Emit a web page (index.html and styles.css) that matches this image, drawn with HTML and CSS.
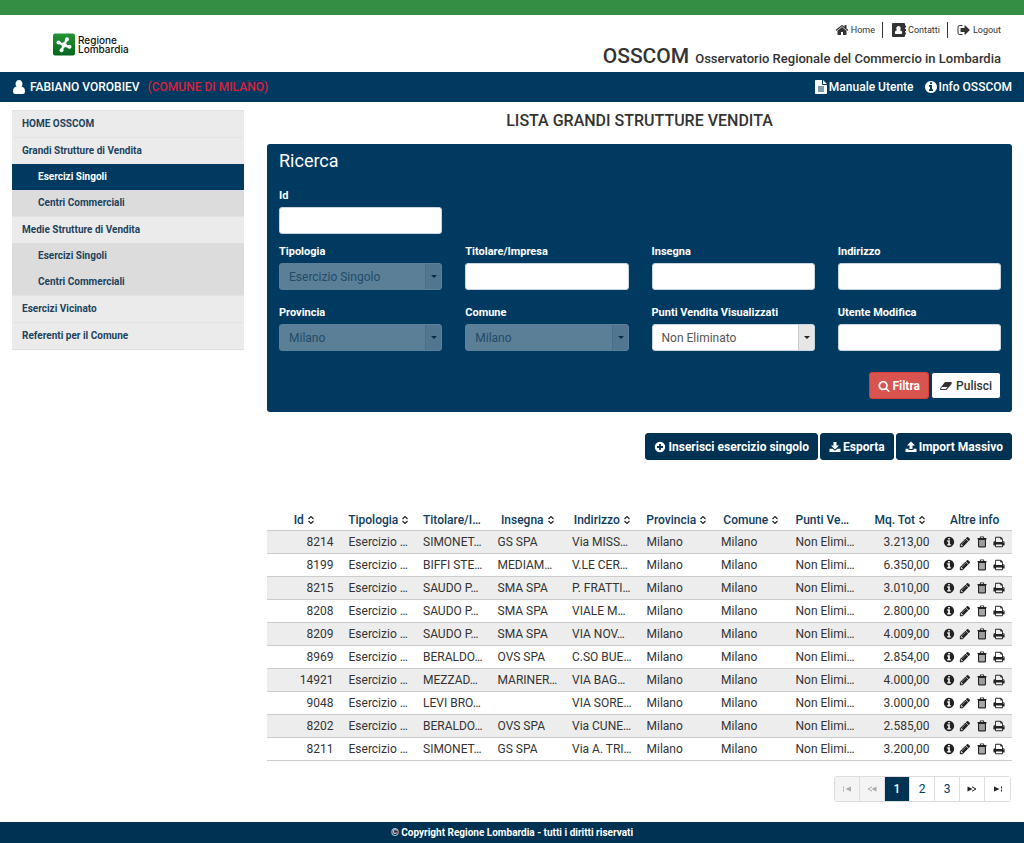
FILE: index.html
```html
<!DOCTYPE html>
<html lang="it">
<head>
<meta charset="utf-8">
<title>OSSCOM - Lista Grandi Strutture Vendita</title>
<link rel="stylesheet" href="styles.css">
</head>
<body>
<svg class="sprite" aria-hidden="true">
  <symbol id="home" viewBox="0 0 1792 1792"><path d="M1472 992v480q0 26-19 45t-45 19h-384v-384h-256v384h-384q-26 0-45-19t-19-45v-480q0-1 .5-3t.5-3l575-474 575 474q1 2 1 6zm223-69l-62 74q-8 9-21 11h-3q-13 0-21-7l-692-577-692 577q-12 8-24 7-13-2-21-11l-62-74q-8-10-7-23.500t11-21.500l719-599q32-26 76-26t76 26l244 204v-195q0-14 9-23t23-9h192q14 0 23 9t9 23v408l219 182q10 8 11 21.500t-7 23.500z"/></symbol>
  <symbol id="contacts" viewBox="0 0 14 14"><path fill-rule="evenodd" d="M1 0h11q1 0 1 1v1.500h1v2h-1v1.500h1v2h-1v1.500h1v2h-1v1.500q0 1-1 1h-11q-1 0-1-1v-12q0-1 1-1zM6.500 3a2.200 2.400 0 0 0-1.500 4.200q-2.200.3-2.200 2.600 0 1.200 1 1.200h5.400q1 0 1-1.200 0-2.300-2.200-2.600a2.200 2.400 0 0 0-1.500-4.200z"/></symbol>
  <symbol id="logout" viewBox="0 0 1792 1792"><path d="M704 1440q0 4 1 20t.5 26.500-3 23.500-10 19.500-20.500 6.500h-320q-119 0-203.500-84.500t-84.500-203.500v-704q0-119 84.500-203.500t203.500-84.500h320q13 0 22.500 9.500t9.500 22.500q0 4 1 20t.5 26.500-3 23.500-10 19.500-20.500 6.500h-320q-66 0-113 47t-47 113v704q0 66 47 113t113 47h312l11.500 1 11.500 3 8 5.500 7 9 2 13.500zm928-544q0 26-19 45l-544 544q-19 19-45 19t-45-19-19-45v-288h-448q-26 0-45-19t-19-45v-384q0-26 19-45t45-19h448v-288q0-26 19-45t45-19 45 19l544 544q19 19 19 45z"/></symbol>
  <symbol id="user" viewBox="0 0 12 14"><path d="M6 0a3.400 3.800 0 0 1 2.500 6.400q3.500.2 3.500 5.100 0 2.500-2.200 2.500h-7.600q-2.200 0-2.200-2.500 0-4.900 3.500-5.100a3.400 3.800 0 0 1 2.500-6.400z"/></symbol>
  <symbol id="file" viewBox="0 0 12 14"><path fill-rule="evenodd" d="M.7 0h6.300v4.300q0 .7.700.7h4.300v8.300q0 .7-.7.700h-10.600q-.7 0-.7-.7v-12.600q0-.7.7-.7zM8 0l4 4h-4zM3 6.500v1h6v-1zM3 8.500v1h6v-1zM3 10.500v1h6v-1z"/></symbol>
  <symbol id="info" viewBox="0 0 1792 1792"><path d="M1152 1376v-160q0-14-9-23t-23-9h-96v-512q0-14-9-23t-23-9h-320q-14 0-23 9t-9 23v160q0 14 9 23t23 9h96v320h-96q-14 0-23 9t-9 23v160q0 14 9 23t23 9h448q14 0 23-9t9-23zm-128-896v-160q0-14-9-23t-23-9h-192q-14 0-23 9t-9 23v160q0 14 9 23t23 9h192q14 0 23-9t9-23zm640 416q0 209-103 385.500t-279.500 279.500-385.500 103-385.500-103-279.500-279.500-103-385.500 103-385.500 279.500-279.500 385.500-103 385.500 103 279.500 279.500 103 385.500z"/></symbol>
  <symbol id="pencil" viewBox="0 0 1792 1792"><path d="M491 1536l91-91-235-235-91 91v107h128v128h107zm523-928q0-22-22-22-10 0-17 7l-542 542q-7 7-7 17 0 22 22 22 10 0 17-7l542-542q7-7 7-17zm-54-192l416 416-832 832h-416v-416zm683 96q0 53-37 90l-166 166-416-416 166-165q36-38 90-38 53 0 91 38l235 234q37 39 37 91z"/></symbol>
  <symbol id="trash" viewBox="0 0 12 12"><path fill-rule="evenodd" d="M4.200 .5h3.600l.5 1.500h2.200v1.200h-.5v7q0 1.300-1.200 1.300h-5.600q-1.200 0-1.200-1.300v-7h-.5v-1.200h2.200zM4.800 1.300v.7h2.400v-.7zM3.200 4v6.300h5.600v-6.300z"/><path d="M3.200 4h5.600v6.300h-5.600z" opacity=".4"/></symbol>
  <symbol id="print" viewBox="0 0 1792 1792"><path d="M448 1536h896v-256h-896v256zm0-640h896v-384h-160q-40 0-68-28t-28-68v-160h-640v640zm1152 64q0-26-19-45t-45-19-45 19-19 45 19 45 45 19 45-19 19-45zm128 0v416q0 13-9.500 22.500t-22.500 9.500h-224v160q0 40-28 68t-68 28h-960q-40 0-68-28t-28-68v-160h-224q-13 0-22.500-9.500t-9.500-22.500v-416q0-79 56.500-135.500t135.500-56.500h64v-544q0-40 28-68t68-28h672q40 0 88 20t76 48l152 152q28 28 48 76t20 88v256h64q79 0 135.500 56.500t56.500 135.500z"/></symbol>
  <symbol id="search" viewBox="0 0 1792 1792"><path d="M1216 832q0-185-131.500-316.500t-316.500-131.500-316.500 131.500-131.500 316.500 131.500 316.500 316.500 131.500 316.500-131.500 131.500-316.500zm512 832q0 52-38 90t-90 38q-54 0-90-38l-343-342q-179 124-399 124-143 0-273.500-55.500t-225-150-150-225-55.500-273.500 55.500-273.500 150-225 225-150 273.500-55.500 273.500 55.500 225 150 150 225 55.500 273.500q0 220-124 399l343 343q37 37 37 90z"/></symbol>
  <symbol id="eraser" viewBox="0 0 12 12"><path fill-rule="evenodd" d="M5 2h6q1 0 .8 1l-.4 1.200-4.600 5.300q-.4.500-1 .5h-5q-1 0-.8-1l.5-1.200zM2 7l-1 1.700q-.1.400.3.400h4.400l1.800-2.100z"/></symbol>
  <symbol id="plus" viewBox="0 0 12 12"><path fill-rule="evenodd" d="M6 .8a5.200 5.200 0 1 1 0 10.400a5.200 5.200 0 0 1 0-10.400zM5.100 3v2.100h-2.100v1.800h2.100v2.100h1.800v-2.100h2.100v-1.800h-2.100v-2.100z"/></symbol>
  <symbol id="download" viewBox="0 0 12 12"><path d="M4.500 1h3v3.500h2.500l-4 4-4-4h2.500zM.5 7.800h3l2.500 2 2.500-2h3v3.200h-11z"/></symbol>
  <symbol id="upload" viewBox="0 0 12 12"><path d="M6 .5l4 4h-2.500v3.500h-3v-3.500h-2.500zM.5 7.800h3v1.200h5v-1.200h3v3.200h-11z"/></symbol>
  <symbol id="sort" viewBox="0 0 8 10"><path d="M1.500 4l2.500-2.500 2.500 2.500M1.500 6l2.500 2.500 2.500-2.500" fill="none" stroke="currentColor" stroke-width="1.200"/></symbol>
  <symbol id="first" viewBox="0 0 10 6"><path d="M1 .5h1v2h-1zM1 3.500h1v2h-1zM9 .5v5l-5.500-2.500z"/></symbol>
  <symbol id="prev" viewBox="0 0 10 6"><path d="M9.500 .5v5l-5-2.500z"/><path d="M5 .8l-4 2.200 4 2.200" fill="none" stroke="currentColor"/></symbol>
  <symbol id="next" viewBox="0 0 10 6"><path d="M.5 .5v5l5-2.500z"/><path d="M5 .8l4 2.200-4 2.200" fill="none" stroke="currentColor"/></symbol>
  <symbol id="last" viewBox="0 0 10 6"><path d="M8 .5h1v2h-1zM8 3.500h1v2h-1zM1 .5v5l5.500-2.500z"/></symbol>
</svg>

<header class="top">
  <div class="brand">
    <svg class="brand-mark" viewBox="0 0 22 22" aria-hidden="true">
      <defs><linearGradient id="leaf" x1="0" y1="0" x2="0" y2="1"><stop offset="0" stop-color="#259536"/><stop offset="1" stop-color="#04651e"/></linearGradient></defs>
      <rect width="22" height="22" rx="2" fill="url(#leaf)"/>
      <g stroke="#fff" stroke-width="2.400" stroke-linecap="round"><path d="M11 11.500l3-6M11 11.500l5.500 2M11 11.500l-2.500 5.500M11 11.500l-5.500-2.500"/></g>
      <g fill="#fff"><circle cx="11" cy="11.300" r="2.600"/><circle cx="14" cy="5.800" r="2"/><circle cx="16.500" cy="13.300" r="2"/><circle cx="8.500" cy="16.700" r="2"/><circle cx="5.500" cy="9" r="2"/></g>
    </svg>
    <div class="brand-name"><span>Regione</span><span>Lombardia</span></div>
  </div>
  <div class="top-right">
    <nav class="quick">
      <a href="#"><svg class="i14"><use href="#home"/></svg>Home</a>
      <a href="#"><svg class="i14"><use href="#contacts"/></svg>Contatti</a>
      <a href="#"><svg class="i14"><use href="#logout"/></svg>Logout</a>
    </nav>
    <div class="app-title"><strong>OSSCOM</strong><span>Osservatorio Regionale del Commercio in Lombardia</span></div>
  </div>
</header>

<div class="userbar">
  <div class="user"><svg class="i14"><use href="#user"/></svg><span>FABIANO VOROBIEV</span><span class="town">(COMUNE DI MILANO)</span></div>
  <nav class="help">
    <a href="#"><svg class="i14"><use href="#file"/></svg>Manuale Utente</a>
    <a href="#"><svg class="i14"><use href="#info"/></svg>Info OSSCOM</a>
  </nav>
</div>

<div class="layout">
  <nav class="menu">
    <a href="#">HOME OSSCOM</a>
    <a href="#">Grandi Strutture di Vendita</a>
    <a href="#" class="sub active">Esercizi Singoli</a>
    <a href="#" class="sub">Centri Commerciali</a>
    <a href="#">Medie Strutture di Vendita</a>
    <a href="#" class="sub">Esercizi Singoli</a>
    <a href="#" class="sub">Centri Commerciali</a>
    <a href="#">Esercizi Vicinato</a>
    <a href="#">Referenti per il Comune</a>
  </nav>

  <main>
    <h1>LISTA GRANDI STRUTTURE VENDITA</h1>
    <form class="search">
      <h2>Ricerca</h2>
      <div class="fields">
        <div class="field lone"><label for="f-id">Id</label><input id="f-id" type="text"></div>
        <div class="field"><label for="f-tipo">Tipologia</label><div class="pick off"><select id="f-tipo" disabled><option>Esercizio Singolo</option></select></div></div>
        <div class="field"><label for="f-tit">Titolare/Impresa</label><input id="f-tit" type="text"></div>
        <div class="field"><label for="f-ins">Insegna</label><input id="f-ins" type="text"></div>
        <div class="field"><label for="f-ind">Indirizzo</label><input id="f-ind" type="text"></div>
        <div class="field"><label for="f-prov">Provincia</label><div class="pick off"><select id="f-prov" disabled><option>Milano</option></select></div></div>
        <div class="field"><label for="f-com">Comune</label><div class="pick off"><select id="f-com" disabled><option>Milano</option></select></div></div>
        <div class="field"><label for="f-pv">Punti Vendita Visualizzati</label><div class="pick"><select id="f-pv"><option>Non Eliminato</option></select></div></div>
        <div class="field"><label for="f-ut">Utente Modifica</label><input id="f-ut" type="text"></div>
      </div>
      <div class="buttons">
        <button type="button" class="btn red"><svg class="i12"><use href="#search"/></svg>Filtra</button>
        <button type="button" class="btn white"><svg class="i12"><use href="#eraser"/></svg>Pulisci</button>
      </div>
    </form>

    <div class="buttons actions">
      <button type="button" class="btn"><svg class="i12"><use href="#plus"/></svg>Inserisci esercizio singolo</button>
      <button type="button" class="btn"><svg class="i12"><use href="#download"/></svg>Esporta</button>
      <button type="button" class="btn"><svg class="i12"><use href="#upload"/></svg>Import Massivo</button>
    </div>

    <table class="grid">
      <thead><tr>
        <th>Id<svg class="sort"><use href="#sort"/></svg></th>
        <th>Tipologia<svg class="sort"><use href="#sort"/></svg></th>
        <th class="cut">Titolare/I…</th>
        <th>Insegna<svg class="sort"><use href="#sort"/></svg></th>
        <th>Indirizzo<svg class="sort"><use href="#sort"/></svg></th>
        <th>Provincia<svg class="sort"><use href="#sort"/></svg></th>
        <th>Comune<svg class="sort"><use href="#sort"/></svg></th>
        <th class="cut">Punti Ve…</th>
        <th>Mq. Tot<svg class="sort"><use href="#sort"/></svg></th>
        <th>Altre info</th>
      </tr></thead>
      <tbody id="rows"></tbody>
    </table>

    <nav class="pager" aria-label="Pagine">
      <button type="button" disabled aria-label="Prima"><svg class="arrow"><use href="#first"/></svg></button>
      <button type="button" disabled aria-label="Precedente"><svg class="arrow"><use href="#prev"/></svg></button>
      <button type="button" class="current">1</button>
      <button type="button">2</button>
      <button type="button">3</button>
      <button type="button" aria-label="Successiva"><svg class="arrow"><use href="#next"/></svg></button>
      <button type="button" aria-label="Ultima"><svg class="arrow"><use href="#last"/></svg></button>
    </nav>
  </main>
</div>

<footer>© Copyright Regione Lombardia - tutti i diritti riservati</footer>
<script src="rows.js"></script>
</body>
</html>
```
FILE: rows.js
```js
const data = [
  ["8214", "SIMONET…", "GS SPA", "Via MISS…", "3.213,00"],
  ["8199", "BIFFI STE…", "MEDIAM…", "V.LE CER…", "6.350,00"],
  ["8215", "SAUDO P…", "SMA SPA", "P. FRATTI…", "3.010,00"],
  ["8208", "SAUDO P…", "SMA SPA", "VIALE M…", "2.800,00"],
  ["8209", "SAUDO P…", "SMA SPA", "VIA NOV…", "4.009,00"],
  ["8969", "BERALDO…", "OVS SPA", "C.SO BUE…", "2.854,00"],
  ["14921", "MEZZAD…", "MARINER…", "VIA BAG…", "4.000,00"],
  ["9048", "LEVI BRO…", "", "VIA SORE…", "3.000,00"],
  ["8202", "BERALDO…", "OVS SPA", "Via CUNE…", "2.585,00"],
  ["8211", "SIMONET…", "GS SPA", "Via A. TRI…", "3.200,00"]
];
const tools = [["info", "Dettaglio"], ["pencil", "Modifica"], ["trash", "Elimina"], ["print", "Stampa"]]
  .map(([icon, name]) => `<button type="button" aria-label="${name}"><svg class="i12"><use href="#${icon}"/></svg></button>`)
  .join("");
document.getElementById("rows").innerHTML = data.map(([id, owner, sign, street, area]) => `<tr>
  <td class="num">${id}</td><td>Esercizio …</td><td>${owner}</td><td>${sign}</td><td>${street}</td>
  <td>Milano</td><td>Milano</td><td>Non Elimi…</td><td class="num">${area}</td>
  <td class="tools"><div>${tools}</div></td></tr>`).join("");
```
FILE: styles.css
```css
* { box-sizing: border-box; }
body { margin: 0; min-height: 100vh; display: flex; flex-direction: column; background: #fff; color: #333; font: 12px/16px Roboto, "Liberation Sans", sans-serif; }
a { color: inherit; text-decoration: none; }
button, input, select { font: inherit; }
svg { fill: currentColor; flex: none; }
.sprite { display: none; }
.i14 { width: 14px; height: 14px; }
.i12 { width: 12px; height: 12px; }

.top { display: flex; justify-content: space-between; height: 72px; border-top: 15px solid #348e43; padding: 0 23px 0 53px; }
.brand { display: flex; align-items: center; gap: 3px; padding-top: 2px; }
.brand-mark { width: 22px; height: 23px; }
.brand-name { display: grid; color: #111; font: 500 10px/9px Inter, sans-serif; }
.top-right { display: flex; flex-direction: column; align-items: flex-end; }
.quick { display: flex; padding-top: 7px; font-size: 9px; }
.quick a { display: flex; align-items: center; gap: 2px; line-height: 18px; height: 16px; }
.quick a + a { border-left: 1px solid #333; margin-left: 7px; padding-left: 9px; }
.app-title { display: flex; align-items: baseline; gap: 6px; padding-top: 6px; font-weight: 500; font-size: 13px; line-height: 24px; }
.app-title strong { font-weight: 500; font-size: 21px; }

.userbar { display: flex; justify-content: space-between; align-items: center; height: 30px; padding: 0 12px; background: #013a60; color: #fff; font-weight: 500; }
.user, .help a { display: flex; align-items: center; }
.user { gap: 4px; line-height: 18px; }
.town { margin-left: 4px; color: #d9213c; }
.help { display: flex; gap: 10px; }
.help a { gap: 1px; }

.layout { display: grid; grid-template-columns: 232px 1fr; gap: 23px; padding: 8px 12px 0; flex: 1; align-items: start; }
.menu { background: #ebebeb; border-bottom: 1px solid #ddd; }
.menu a { display: block; padding: 5px 10px; border-top: 1px solid #e3e3e3; color: #1d435c; font-weight: 700; font-size: 10px; }
.menu .sub { padding-left: 26px; background: #dcdcdc; border-top: 0; }
.menu .active { background: #013a60; color: #fff; }

h1 { margin: 0; padding: 1px 0 13px; text-align: center; font-weight: 500; font-size: 16px; line-height: 20px; }
.search { padding: 6px 11px 13px 12px; background: #013a60; border-radius: 3px; color: #fff; }
h2 { margin: 0 0 16px; font-weight: 400; font-size: 18px; line-height: 22px; }
.fields { display: grid; grid-template-columns: repeat(4, 1fr); column-gap: 23px; row-gap: 15px; }
.lone { grid-column: 1 / -1; width: calc((100% - 69px) / 4); margin-bottom: -5px; }
.field { display: grid; gap: 3px; }
.field label { font-weight: 700; font-size: 11px; }
.field input, .field select { display: block; width: 100%; height: 27px; border: 1px solid #c9d4dc; border-radius: 3px; background: #fff; color: #555; padding: 0 9px; }
.field select { appearance: none; opacity: 1; }
.pick { position: relative; }
.pick::before { content: ""; position: absolute; right: 1px; top: 1px; bottom: 1px; width: 15px; background: #e6e6e6; border-left: 1px solid #ccc; border-radius: 0 2px 2px 0; pointer-events: none; }
.pick::after { content: ""; position: absolute; right: 5px; top: 12px; border: 3px solid transparent; border-top-color: #222; pointer-events: none; }
.field .off select { background: #5a7f97; border-color: #5a7f97; color: #224c69; }
.off::before { background: #517690; border-color: #486f89; }
.off::after { border-top-color: #0b2c45; }

.buttons { display: flex; justify-content: flex-end; gap: 2px; padding-top: 21px; }
.btn { display: flex; align-items: center; gap: 2px; height: 27px; padding: 0 8px; border: 1px solid #00304f; border-radius: 3px; background: #003254; color: #fff; font-weight: 700; }
.red { background: #d9534f; border-color: #d43f3a; }
.white { gap: 4px; background: #fff; border-color: #013a60; color: #333; font-weight: 500; }

.grid { width: 100%; margin-top: 47px; border-collapse: collapse; table-layout: fixed; }
.grid tr { height: 23px; }
.grid th, .grid td { padding: 0 7px; white-space: nowrap; border-bottom: 1px solid #ccc; }
.grid th { padding: 3px 0 0; color: #0e3c5c; font-weight: 500; }
.grid .cut { padding-left: 7px; text-align: left; }
.grid .num { text-align: right; padding-right: 8px; }
.grid tbody tr:nth-child(odd) { background: #ededed; }
.sort { width: 8px; height: 10px; margin-left: 3px; vertical-align: -1px; color: #222; }
.grid .tools { padding-left: 5px; }
.tools div { display: flex; justify-content: space-between; }
.tools button { display: flex; padding: 0; border: 0; background: none; color: #222; }

.pager { display: flex; width: max-content; margin: 15px 1px 20px auto; border: 1px solid #ddd; border-radius: 3px; }
.pager button { display: flex; align-items: center; justify-content: center; width: 25px; height: 24px; padding: 0; border: 0; border-right: 1px solid #ddd; background: #fff; color: #013a60; }
.pager button:last-child { border-right: 0; }
.pager .current { background: #003254; color: #fff; font-weight: 500; }
.pager button:disabled { background: #f4f4f4; color: #aaa; }
.pager .arrow { width: 10px; height: 6px; }
.pager button:not(:disabled) .arrow { color: #222; }

footer { padding: 3px 0; background: #003254; color: #fff; text-align: center; font-weight: 700; font-size: 10px; }
```
